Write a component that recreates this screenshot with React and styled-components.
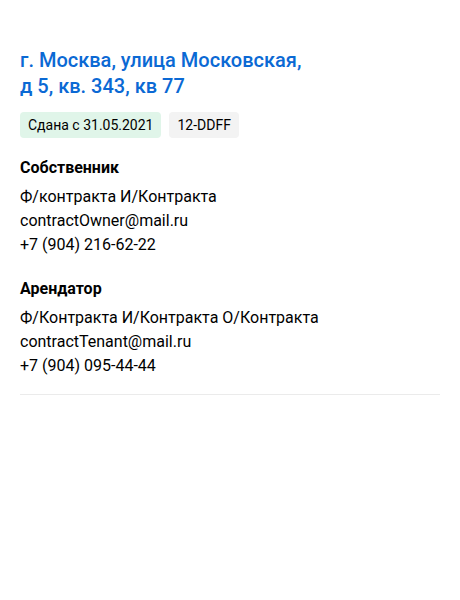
import React from "react";
import styled, { createGlobalStyle } from "styled-components";

const Global = createGlobalStyle`
  html, body { margin: 0; padding: 0; background: #fff; }
  body { font-family: Roboto, "Liberation Sans", sans-serif; color: #000; }
`;

const Page = styled.div`
  padding: 47px 20px 0;
  width: 420px;
`;

const Title = styled.h1`
  margin: 0;
  font-size: 20px;
  line-height: 26px;
  font-weight: 500;
  color: #0b69d4;
`;

const Badges = styled.div`
  display: flex;
  gap: 8px;
  margin-top: 13px;
`;

const Badge = styled.span`
  display: inline-flex;
  align-items: center;
  height: 26px;
  padding: 0 8px;
  border-radius: 4px;
  font-size: 14px;
  background: ${(p) => (p.$tone === "green" ? "#e0f5e9" : "#f3f3f3")};
`;

const Section = styled.section`
  margin-top: ${(p) => p.$top}px;
`;

const SectionTitle = styled.h2`
  margin: 0 0 5px;
  font-size: 16px;
  line-height: 24px;
  font-weight: 700;
`;

const Line = styled.div`
  font-size: 16px;
  line-height: 24px;
`;

const Divider = styled.hr`
  margin: 16px 0 0;
  border: 0;
  border-top: 1px solid #ebebeb;
`;

const people = [
  {
    role: "Собственник",
    name: "Ф/контракта И/Контракта",
    email: "contractOwner@mail.ru",
    phone: "+7 (904) 216-62-22",
    top: 18,
  },
  {
    role: "Арендатор",
    name: "Ф/Контракта И/Контракта О/Контракта",
    email: "contractTenant@mail.ru",
    phone: "+7 (904) 095-44-44",
    top: 20,
  },
];

export default function App() {
  return (
    <>
      <Global />
      <Page>
        <Title>
          г. Москва, улица Московская,
          <br />д 5, кв. 343, кв 77
        </Title>
        <Badges>
          <Badge $tone="green">Сдана с 31.05.2021</Badge>
          <Badge>12-DDFF</Badge>
        </Badges>
        {people.map((p) => (
          <Section key={p.role} $top={p.top}>
            <SectionTitle>{p.role}</SectionTitle>
            <Line>{p.name}</Line>
            <Line>{p.email}</Line>
            <Line>{p.phone}</Line>
          </Section>
        ))}
        <Divider />
      </Page>
    </>
  );
}
